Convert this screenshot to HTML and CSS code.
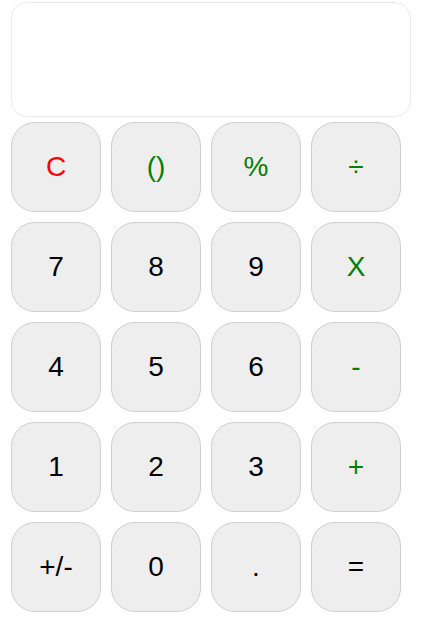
FILE: index.html
```html
<!DOCTYPE html>
<html>
<head>
<meta charset="utf-8">
<link rel="stylesheet" href="styles.css">
</head>
<body>
<div class="calc">
  <div class="display"></div>
  <div class="keys">
    <button class="key red">C</button>
    <button class="key op">()</button>
    <button class="key op">%</button>
    <button class="key op">÷</button>
    <button class="key">7</button>
    <button class="key">8</button>
    <button class="key">9</button>
    <button class="key op">X</button>
    <button class="key">4</button>
    <button class="key">5</button>
    <button class="key">6</button>
    <button class="key op">-</button>
    <button class="key">1</button>
    <button class="key">2</button>
    <button class="key">3</button>
    <button class="key op">+</button>
    <button class="key">+/-</button>
    <button class="key">0</button>
    <button class="key">.</button>
    <button class="key">=</button>
  </div>
</div>
</body>
</html>
```
FILE: styles.css
```css
html, body {
  margin: 0;
  padding: 0;
  background: #fff;
}
.calc {
  padding: 2px 11px;
  font-family: "Liberation Sans", Arial, sans-serif;
}
.display {
  width: 400px;
  height: 115px;
  box-sizing: border-box;
  border: 1px solid #eaeaea;
  border-radius: 16px;
  background: #fff;
}
.keys {
  margin-top: 5px;
  display: grid;
  grid-template-columns: repeat(4, 90px);
  grid-auto-rows: 90px;
  gap: 10px;
}
.key {
  box-sizing: border-box;
  width: 90px;
  height: 90px;
  border: 1px solid #cfcfcf;
  border-radius: 24px;
  background: #eee;
  color: #000;
  font-family: "Liberation Sans", Arial, sans-serif;
  font-size: 28px;
  padding: 0;
}
.key.red { color: #ff0000; }
.key.op { color: #008000; }
```
